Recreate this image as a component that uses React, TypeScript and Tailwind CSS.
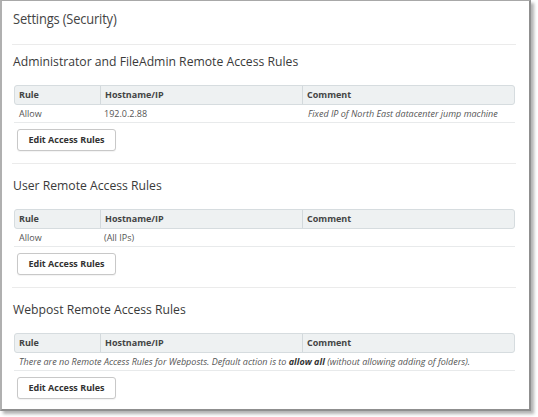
import React from 'react';

type Rule = { rule: string; host: string; comment: string };

const sections: { title: string; rules: Rule[]; empty?: boolean }[] = [
  {
    title: 'Administrator and FileAdmin Remote Access Rules',
    rules: [{ rule: 'Allow', host: '192.0.2.88', comment: 'Fixed IP of North East datacenter jump machine' }],
  },
  {
    title: 'User Remote Access Rules',
    rules: [{ rule: 'Allow', host: '(All IPs)', comment: '' }],
  },
  { title: 'Webpost Remote Access Rules', rules: [], empty: true },
];

const RulesTable: React.FC<{ rules: Rule[]; empty?: boolean }> = ({ rules, empty }) => (
  <div className="ml-[2px] mr-[4px]">
    <div className="flex h-[20px] items-center rounded-[3px] border border-[#d6dcdf] bg-[#eef1f2] text-[9px] font-bold text-[#444]">
      <div className="flex h-full w-[86px] items-center border-r border-[#d3d9dc] pl-[4px]">Rule</div>
      <div className="flex h-full w-[202px] items-center border-r border-[#d3d9dc] pl-[4px]">Hostname/IP</div>
      <div className="flex h-full flex-1 items-center pl-[4px]">Comment</div>
    </div>
    {empty ? (
      <div className="flex h-[18px] items-center border-b border-[#e8eaeb] pl-[5px] text-[9px] italic text-[#555]">
        There are no Remote Access Rules for Webposts. Default action is to&nbsp;<b className="text-[#333]">allow all</b>&nbsp;(without allowing adding of folders).
      </div>
    ) : (
      rules.map((r, i) => (
        <div key={i} className="flex h-[18px] items-center border-b border-[#e8eaeb] text-[9px] text-[#555]">
          <div className="w-[86px] pl-[5px]">{r.rule}</div>
          <div className="w-[202px] pl-[4px]">{r.host}</div>
          <div className="flex-1 pl-[6px] italic">{r.comment}</div>
        </div>
      ))
    )}
  </div>
);

export default function App() {
  return (
    <div className="h-[417px] w-[538px] bg-white" style={{ fontFamily: '"Open Sans", "DejaVu Sans", sans-serif' }}>
      <div className="h-[411px] w-[531px] border-t border-l-2 border-r-2 border-b-2 border-t-[#a8a8a8] border-l-[#b0b0b0] border-r-[#8f8f8f] border-b-[#8f8f8f] bg-white shadow-[3px_3px_3px_rgba(0,0,0,0.3)]">
        <div className="px-[10px] pt-[5px]">
          <h1 className="pl-[1px] leading-[24px]">
            <span className="inline-block origin-left scale-x-[0.86] text-[15px] tracking-[-0.2px] text-[#444]">Settings (Security)</span>
          </h1>
          <div className="mt-[14px] mr-[3px] border-t border-[#ebebeb]" />
          {sections.map((s, i) => (
            <div key={i}>
              <h2 className={`${i === 0 ? 'mt-[8px]' : 'mt-[13px]'} pl-[1px] text-[12.2px] leading-[18px] text-[#3a3a3a]`}>{s.title}</h2>
              <div className="mt-[14px]">
                <RulesTable rules={s.rules} empty={s.empty} />
              </div>
              <button className="mt-[6px] ml-[5px] h-[22px] w-[99px] rounded-[3px] border border-[#c8c8c8] bg-white text-[9px] font-bold text-[#333] shadow-[0_1px_1px_rgba(0,0,0,0.05)]">
                Edit Access Rules
              </button>
              {i < sections.length - 1 && <div className="mt-[12px] mr-[3px] border-t border-[#ebebeb]" />}
            </div>
          ))}
        </div>
      </div>
    </div>
  );
}
